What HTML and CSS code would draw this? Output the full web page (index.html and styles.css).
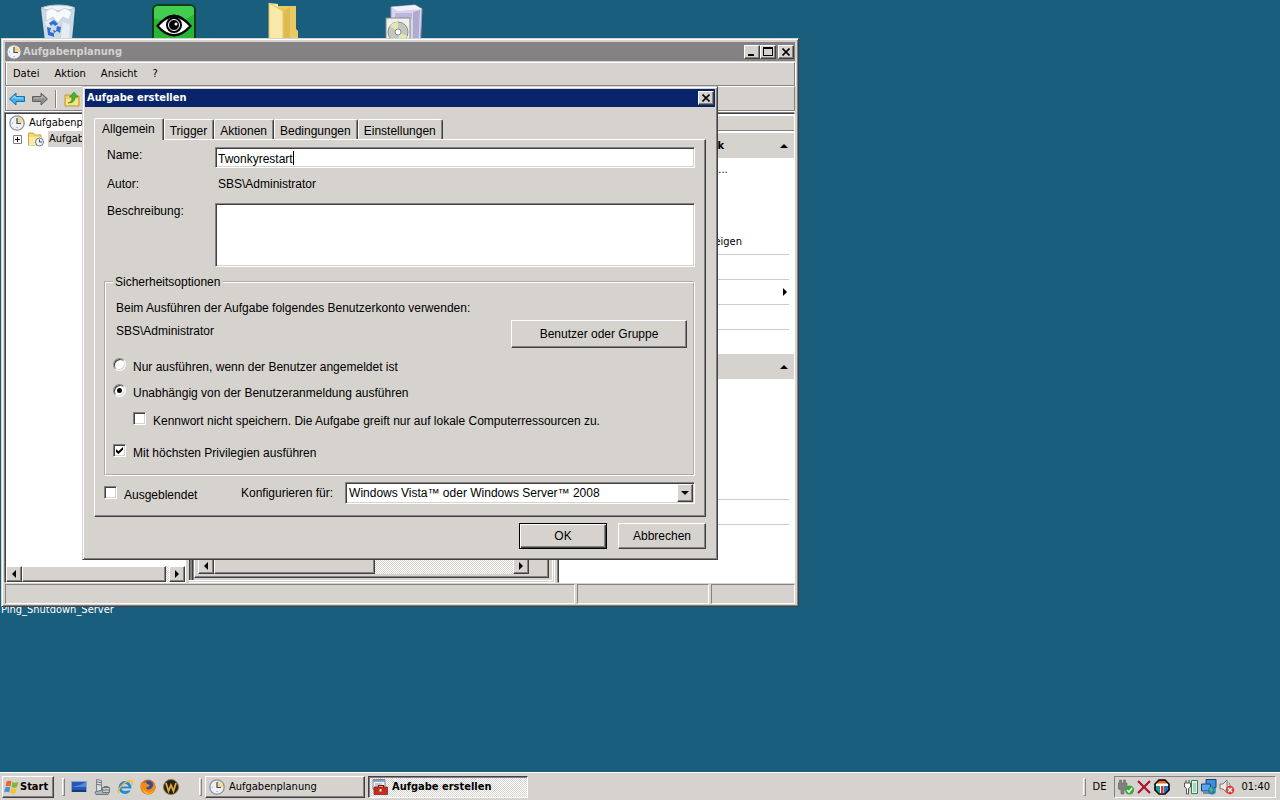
FILE: index.html
```html
<!DOCTYPE html>
<html lang="de">
<head>
    <meta charset="UTF-8">
    <meta name="viewport" content="width=device-width, initial-scale=1.0">
    <title>Aufgabenplanung</title>
    <link rel="stylesheet" href="styles.css">
</head>
<body>
    <svg class="sprite" aria-hidden="true">
        <symbol id="clock" viewBox="0 0 16 16">
            <circle cx="8" cy="8" r="7.2" fill="#eef2f6" stroke="#8a909a" stroke-width="1.3"/>
            <path d="M8 8V2A6 6 0 0 1 14 8z" fill="#f3d98a"/>
            <path d="M8 3v5.500h4" fill="none" stroke="#3a4a66" stroke-width="1.200"/>
            <path d="M3 8h1M8 13v-1" stroke="#8890a0"/>
        </symbol>
        <symbol id="close" viewBox="0 0 8 8">
            <path d="M.5.5l7 7M7.500.5l-7 7" fill="none" stroke="#000" stroke-width="1.600"/>
        </symbol>
        <symbol id="left" viewBox="0 0 8 8"><path d="M6 0v8L2 4z" fill="#000"/></symbol>
        <symbol id="right" viewBox="0 0 8 8"><path d="M2 0v8l4-4z" fill="#000"/></symbol>
        <symbol id="up" viewBox="0 0 8 8"><path d="M0 6h8L4 2z" fill="#000"/></symbol>
        <symbol id="down" viewBox="0 0 8 8"><path d="M0 2h8L4 6z" fill="#000"/></symbol>
    </svg>

    <main class="desktop">
        <svg class="desk-icon recycle" width="38" height="48" viewBox="0 0 38 48">
            <path d="M2 4h34l-4 42H7z" fill="#cfdbe4"/>
            <path d="M2 4c8-4 27-4 34 0-7 4-26 4-34 0z" fill="#eef4f8" stroke="#a9bac6"/>
            <path d="M7 7l6-3 6 4 7-4 7 4-3 8-6-3-5 6-5-6-7 4z" fill="#f7fafc" stroke="#b4c3cd" stroke-width=".7"/>
            <path d="M24 18l7 3-2 18-7-4zM6 18l5-3 4 5-6 4z" fill="#e6edf2"/>
            <path d="M10 19l5-3 4 4-3 2-2-2-2 2zM18 22l4 1-1 6-3-2-3 2-1-3 3 1zM8 23l4 1-1 4 4 1v4l-6-2z" fill="#2d6fd2"/>
        </svg>
        <svg class="desk-icon eye" width="44" height="48" viewBox="0 0 44 48">
            <rect x="1" y="1" width="42" height="46" rx="5" fill="#27b637" stroke="#123c18" stroke-width="2"/>
            <path d="M2 14V6q0-4 4-4h32q4 0 4 4v4Q24 24 2 14z" fill="#43cc50"/>
            <path d="M4 22Q22-1 40 22 22 43 4 22z" fill="#000"/>
            <path d="M7 22Q22 5 37 22 22 38 7 22z" fill="#fff"/>
            <circle cx="22" cy="21" r="8" fill="#000"/>
            <circle cx="22" cy="21" r="5.500" fill="none" stroke="#fff"/>
            <circle cx="24" cy="20" r="1.500" fill="#fff"/>
        </svg>
        <svg class="desk-icon folder" width="32" height="48" viewBox="0 0 32 48">
            <path d="M2 1l9 1v44H2z" fill="#fbe9a0"/>
            <path d="M11 4h18v23l2 2v18H11z" fill="#e8c964"/>
            <path d="M2 1l14 8v38H2z" fill="#f9e9a6" stroke="#dcc26a"/>
            <path d="M17 9l6-4v42h-6z" fill="#dfba50"/>
        </svg>
        <svg class="desk-icon installer" width="38" height="48" viewBox="0 0 38 48">
            <path d="M6 3l24-2 7 4-2 42H6z" fill="#d8d4ec" stroke="#9a98be"/>
            <path d="M6 3l24-2 7 4-24 2z" fill="#f2f0fb"/>
            <path d="M28 8l7-2-2 40h-5z" fill="#aeaad0"/>
            <path d="M10 9h17v6H10z" fill="#bcb8dc"/>
            <rect x="1" y="14" width="24" height="33" fill="#eef0ee" stroke="#888"/>
            <circle cx="13" cy="28" r="10" fill="#c3c7c0" stroke="#8c908c"/>
            <path d="M13 28L5 22a10 10 0 0 1 8-4zM13 28l9 4a10 10 0 0 1-7 6z" fill="#e4e8a8"/>
            <circle cx="13" cy="28" r="3" fill="#fff" stroke="#888"/>
        </svg>
        <span class="desk-label">Ping_Shutdown_Server</span>

        <section class="window main-window">
            <header class="titlebar">
                <svg class="icon"><use href="#clock"/></svg>
                <h1>Aufgabenplanung</h1>
                <button class="caption" aria-label="Minimieren"><svg width="10" height="8"><path d="M1 6h6v2H1z"/></svg></button>
                <button class="caption" aria-label="Maximieren"><svg width="10" height="9"><path d="M0 0h10v9H0zM1 2v6h8V2z" fill-rule="evenodd"/></svg></button>
                <button class="caption caption-close" aria-label="Schließen"><svg width="8" height="8"><use href="#close"/></svg></button>
            </header>
            <nav class="menubar">
                <a href="#">Datei</a>
                <a href="#">Aktion</a>
                <a href="#">Ansicht</a>
                <a href="#">?</a>
            </nav>
            <div class="toolbar">
                <button aria-label="Zurück"><svg class="icon" viewBox="0 0 16 16"><path d="M.5 8L7 2v3.500h8.500v5H7V14z" fill="#3fb0ee" stroke="#1c6ea8"/><path d="M3 7.500l3-2.500v2h8" fill="none" stroke="#a4dcfa"/></svg></button>
                <button aria-label="Vorwärts"><svg class="icon" viewBox="0 0 16 16"><path d="M15.500 8L9 2v3.500H.5v5H9V14z" fill="#8e8e8e" stroke="#606060"/><path d="M2 7h8V5l3 2.500" fill="none" stroke="#bbb"/></svg></button>
                <span class="tool-sep"></span>
                <button aria-label="Eine Ebene höher"><svg class="icon" viewBox="0 0 16 16"><path d="M1 4h5l1 1h8v10H1z" fill="#f1cf62" stroke="#c49a30"/><path d="M2 8h12v6H2z" fill="#f9e48e"/><path d="M4 12c4-1 4-4 4-6H5.500L10 1l4 5h-3c0 4-2 6-7 6z" fill="#49b52d" stroke="#2b7d1a" stroke-width=".6"/></svg></button>
            </div>
            <div class="panes">
                <div class="pane tree">
                    <ul>
                        <li><svg class="icon"><use href="#clock"/></svg><span>Aufgabenpl</span></li>
                        <li class="child">
                            <svg width="9" height="9"><path d="M.5.5h8v8h-8z" fill="#fff" stroke="#808080"/><path d="M2 4.500h5M4.500 2v5" stroke="#000"/></svg>
                            <svg class="icon" viewBox="0 0 16 16"><path d="M.5 2h5l1 2H13v10H.5z" fill="#f5d978" stroke="#c9a545"/><path d="M1 6h12v8H1z" fill="#fbeaa6"/><circle cx="11.500" cy="11" r="4" fill="#eef2f6" stroke="#6f7a88"/><path d="M11.500 8.500V11H14" fill="none" stroke="#3a4a66"/></svg>
                            <span class="selected">Aufgabe</span>
                        </li>
                    </ul>
                    <div class="scrollbar">
                        <button aria-label="Links"><svg width="8" height="8"><use href="#left"/></svg></button>
                        <div class="track"><div class="thumb thumb-wide"></div></div>
                        <button aria-label="Rechts"><svg width="8" height="8"><use href="#right"/></svg></button>
                    </div>
                </div>
                <div class="center">
                    <div class="center-body">
                        <div class="scrollbar">
                            <button aria-label="Links"><svg width="8" height="8"><use href="#left"/></svg></button>
                            <div class="track"><div class="thumb"></div></div>
                            <button aria-label="Rechts"><svg width="8" height="8"><use href="#right"/></svg></button>
                        </div>
                    </div>
                </div>
                <aside class="pane actions">
                    <div class="actions-head"></div>
                    <h2>Aufgabenplanungsbibliothek<svg width="8" height="8"><use href="#up"/></svg></h2>
                    <ul>
                        <li>Einfache Aufgabe erstellen...</li>
                        <li></li>
                        <li></li>
                        <li class="line">Alle aktiven Aufgaben anzeigen</li>
                        <li class="line"></li>
                        <li class="line more"><svg width="8" height="8"><use href="#right"/></svg></li>
                        <li class="line"></li>
                        <li></li>
                    </ul>
                    <h2><svg width="8" height="8"><use href="#up"/></svg></h2>
                    <ul>
                        <li></li>
                        <li></li>
                        <li></li>
                        <li></li>
                        <li class="line"></li>
                        <li class="line"></li>
                    </ul>
                </aside>
            </div>
            <footer class="statusbar"><span></span><span></span><span></span></footer>
        </section>

        <section class="window dialog" role="dialog" aria-labelledby="dialog-title">
            <header class="titlebar active">
                <h1 id="dialog-title">Aufgabe erstellen</h1>
                <button class="caption" aria-label="Schließen"><svg width="8" height="8"><use href="#close"/></svg></button>
            </header>
            <form class="dialog-body">
                <div class="tabs" role="tablist">
                    <button type="button" role="tab" class="tab current" aria-selected="true">Allgemein</button>
                    <button type="button" role="tab" class="tab">Trigger</button>
                    <button type="button" role="tab" class="tab">Aktionen</button>
                    <button type="button" role="tab" class="tab">Bedingungen</button>
                    <button type="button" role="tab" class="tab">Einstellungen</button>
                </div>
                <div class="tab-panel">
                    <div class="fields">
                        <label for="name">Name:</label>
                        <div class="name-box">
                            <input type="text" id="name" class="sunken" value="Twonkyrestart">
                            <span class="caret"></span>
                        </div>
                        <span>Autor:</span>
                        <span class="author">SBS\Administrator</span>
                        <label for="desc">Beschreibung:</label>
                        <textarea id="desc" class="sunken"></textarea>
                    </div>
                    <fieldset>
                        <legend>Sicherheitsoptionen</legend>
                        <p>Beim Ausführen der Aufgabe folgendes Benutzerkonto verwenden:</p>
                        <div class="account">
                            <span>SBS\Administrator</span>
                            <button type="button" class="btn btn-wide">Benutzer oder Gruppe</button>
                        </div>
                        <label class="option"><input type="radio" name="logon">Nur ausführen, wenn der Benutzer angemeldet ist</label>
                        <label class="option"><input type="radio" name="logon" checked>Unabhängig von der Benutzeranmeldung ausführen</label>
                        <label class="option indent"><input type="checkbox">Kennwort nicht speichern. Die Aufgabe greift nur auf lokale Computerressourcen zu.</label>
                        <label class="option spaced"><input type="checkbox" checked>Mit höchsten Privilegien ausführen</label>
                    </fieldset>
                    <div class="config">
                        <label class="option"><input type="checkbox">Ausgeblendet</label>
                        <label for="os">Konfigurieren für:</label>
                        <div class="select-box sunken">
                            <select id="os">
                                <option>Windows Vista™ oder Windows Server™ 2008</option>
                            </select>
                            <span class="drop"><svg width="8" height="8"><use href="#down"/></svg></span>
                        </div>
                    </div>
                </div>
                <div class="buttons">
                    <button type="button" class="btn default">OK</button>
                    <button type="button" class="btn">Abbrechen</button>
                </div>
            </form>
        </section>
    </main>

    <footer class="taskbar">
        <button class="task start">
            <svg class="icon" viewBox="0 0 16 16"><path d="M2.500 2.500q2.500-1.500 5 0l-1 5q-2.500-1.500-5 0z" fill="#ef6330"/><path d="M8.500 3q2.500 1.500 6 0l-1.500 5q-3 1.500-5.500 0z" fill="#7cba35"/><path d="M1.200 8.500q2.500-1.500 5 0l-1 5q-2.500-1.500-5 0z" fill="#4a90dc"/><path d="M7.200 9q2.500 1.500 5.500 0l-1.200 5q-3 1.500-5.300 0z" fill="#f6c22e"/></svg>
            Start
        </button>
        <span class="grip"></span>
        <div class="quick">
            <svg class="icon" viewBox="0 0 16 16"><path d="M.5 2.500h15v10H.5z" fill="#2458b8" stroke="#8da3c6"/><path d="M1 8q7-1 14-5v5H1z" fill="#4f8ade"/><path d="M1 11h14v2H1z" fill="#173a78"/></svg>
            <svg class="icon" viewBox="0 0 16 16"><path d="M2.500.5l5 1v12h-5z" fill="#d9dde0" stroke="#7c8388"/><path d="M3 3l4 .5M3 5.500l4 .5" stroke="#6b7277"/><path d="M1 13l7-2 7 2-1 2.500H2z" fill="#a9b1b6" stroke="#6e767b"/><path d="M8.500 8.500h7v5h-7z" fill="#c8ced2" stroke="#6e767b"/><path d="M10 8.500v-1h4v1M9 11h6" fill="none" stroke="#6e767b"/></svg>
            <svg class="icon" viewBox="0 0 16 16"><circle cx="8" cy="8.500" r="5" fill="none" stroke="#2489d8" stroke-width="3"/><path d="M4 7.500h9v2H4z" fill="#2489d8"/><path d="M9 9.500h6v2H9z" fill="#d6d3ce"/><path d="M2 14.500C-1 11 9 0 15 2c1 1 0 3-1 4" fill="none" stroke="#f0bb2c" stroke-width="1.400"/></svg>
            <svg class="icon" viewBox="0 0 16 16"><circle cx="8" cy="8" r="7.500" fill="#d9621a"/><circle cx="8.500" cy="6.500" r="4.700" fill="#2c4f94"/><path d="M1 3l3 1 2-1 1 2 3 1-2 2-2 1c2 3 6 1 7-2l1-4c4 6 0 13-6 12.500S-1 10 1 3z" fill="#f08a1c"/><path d="M3 10c2 4 7 5 10 2-2 4-9 4-10-2z" fill="#fbc93a"/></svg>
            <svg class="icon" viewBox="0 0 16 16"><circle cx="8" cy="8" r="7.500" fill="#26211a" stroke="#8b7440"/><path d="M3 4l2.500 8L8 6l2.500 6L13 4" fill="none" stroke="#dcaa3c" stroke-width="1.800"/></svg>
        </div>
        <span class="grip"></span>
        <div class="tasks">
            <button class="task"><svg class="icon"><use href="#clock"/></svg>Aufgabenplanung</button>
            <button class="task pressed">
                <svg class="icon" viewBox="0 0 16 16"><path d="M1 .5h12v10H1z" fill="#f4f4f4" stroke="#7888a0"/><path d="M1 1h12v2H1z" fill="#8fa3c4"/><path d="M3 5h7M3 7h3" stroke="#999"/><path d="M6.500 8V6.500h5V8" fill="none" stroke="#811" stroke-width="1.200"/><path d="M2 8h13.500v7.500H2z" fill="#cf2a22" stroke="#8a1410" stroke-width=".7"/><path d="M2 11h13.500" stroke="#741"/><path d="M7.500 10h2v2.500h-2z" fill="#eee"/></svg>
                Aufgabe erstellen
            </button>
        </div>
        <span class="grip"></span>
        <span class="lang">DE</span>
        <div class="tray">
            <svg class="icon" viewBox="0 0 16 16"><path d="M1.500 1h2v3h2V1h2v3H9v4q0 3-3 3v4H3v-4Q0 11 0 8V4h1.500z" fill="#808080" stroke="#666" stroke-width=".6"/><circle cx="11.500" cy="11" r="4.500" fill="#39a935"/><path d="M9 11l2 2 3-4" fill="none" stroke="#fff" stroke-width="1.500"/></svg>
            <svg class="icon" viewBox="0 0 16 16"><path d="M2 2l12 12M14 2L2 14" stroke="#b01030" stroke-width="2.200"/></svg>
            <svg class="icon" viewBox="0 0 16 16"><path d="M5 1h6l4 4v6l-4 4H5l-4-4V5z" fill="#fff"/><path d="M1.500 5L5 1h6l3.500 4z" fill="#e8661c"/><path d="M1 7h5v7H4l-3-3z" fill="#1c9a9a"/><path d="M10 7h5v4l-3 3h-2z" fill="#2672c8"/><path d="M2 4.500h12v2.500h-4v8H6V7H2z" fill="#fff"/><path d="M7 7h2.500v7H7z" fill="#d8381c"/><path d="M5 1h6l4 4v6l-4 4H5l-4-4V5z" fill="none" stroke="#000" stroke-width="1.600"/></svg>
            <span class="tray-gap"></span>
            <svg class="icon" viewBox="0 0 16 16"><path d="M8.500 1.500h6v13h-6z" fill="#dff3e4" stroke="#3b7a58"/><path d="M10 4h3v9h-3z" fill="#9fdcb4"/><path d="M3 1v3M6 1v3M1.500 4h6v4l-2 1.500V15h-2V9.500L1.500 8z" fill="#fff" stroke="#555"/></svg>
            <svg class="icon" viewBox="0 0 16 16"><path d="M5 .5h10v8H5z" fill="#3e8ee0" stroke="#1c3f78"/><path d="M.5 5h9v7h-9z" fill="#58a6ee" stroke="#1c3f78"/><path d="M2 14h6" stroke="#1c3f78"/><circle cx="11" cy="11.500" r="4" fill="#2477c8"/><path d="M8 10l3-2 1 3-2 3zM13 10l2 1-1 3z" fill="#4fc050"/></svg>
            <svg class="icon" viewBox="0 0 16 16"><path d="M1 5h3l4-4v13l-4-4H1z" fill="#e8e8e8" stroke="#777"/><path d="M10 4q2 2 1 4" fill="none" stroke="#888"/><circle cx="11" cy="11" r="4.300" fill="#dc3c34"/><path d="M9 9l4 4M13 9l-4 4" stroke="#fff" stroke-width="1.300"/></svg>
            <time>01:40</time>
        </div>
    </footer>
</body>
</html>
```

FILE: styles.css
```css
* {
    box-sizing: border-box;
}
body {
    margin: 0;
    height: 100vh;
    display: flex;
    flex-direction: column;
    overflow: hidden;
    background: #195e7c;
    color: #000;
    font-family: "DejaVu Sans Condensed", "Liberation Sans", sans-serif;
    font-size: 11px;
    line-height: 16px;
}
h1, h2, p, ul {
    margin: 0;
    padding: 0;
}
ul {
    list-style: none;
}
button, input, select, textarea {
    font: inherit;
    color: inherit;
    margin: 0;
    padding: 0;
}
a {
    color: inherit;
    text-decoration: none;
}
svg {
    display: block;
    flex: none;
}
.sprite {
    position: absolute;
    width: 0;
    height: 0;
}
.icon {
    width: 16px;
    height: 16px;
}

/* Desktop */
.desktop {
    flex: 1;
    position: relative;
    overflow: hidden;
}
.desk-icon {
    position: absolute;
    top: 4px;
}
.recycle { left: 39px; }
.eye { left: 152px; }
.folder { left: 267px; top: 2px; }
.installer { left: 385px; }
.desk-label {
    position: absolute;
    left: 1px;
    top: 602px;
    color: #fff;
}

/* Windows */
.window {
    position: absolute;
    background: #d6d3ce;
    border: 1px solid;
    border-color: #d6d3ce #404040 #404040 #d6d3ce;
    box-shadow: inset 1px 1px #fff, inset -1px -1px #808080;
}
.main-window {
    left: 1px;
    top: 38px;
    width: 798px;
    padding: 3px 3px 2px;
}
.dialog {
    left: 82px;
    top: 86px;
    width: 636px;
    padding: 2px;
}
.titlebar {
    display: flex;
    align-items: center;
    height: 19px;
    padding: 0 1px;
    background: #848284;
    color: #d6d3ce;
}
.titlebar.active {
    height: 18px;
    background: #08246b;
    color: #fff;
}
.titlebar h1 {
    flex: 1;
    padding-left: 1px;
    font-size: 11px;
}
.caption {
    display: flex;
    align-items: center;
    justify-content: center;
    width: 16px;
    height: 14px;
}
.caption-close {
    margin-left: 2px;
}
.caption, .scrollbar button, .thumb, .drop, .btn, .task {
    background: #d6d3ce;
    border: 1px solid;
    border-color: #fff #404040 #404040 #fff;
    box-shadow: inset -1px -1px #848284;
    border-radius: 0;
}
.menubar {
    display: flex;
    align-items: center;
    gap: 15px;
    height: 24px;
    margin-top: 1px;
    padding-left: 7px;
    border: 1px solid #848284;
    border-top-color: #fff;
    box-shadow: inset 1px 0 #fff, 1px 0 #fff;
}
.toolbar {
    display: flex;
    align-items: center;
    gap: 7px;
    height: 25px;
    padding-left: 3px;
    border: 1px solid #848284;
    border-top-color: #fff;
    box-shadow: inset 1px 0 #fff, 0 1px #fff;
}
.toolbar button {
    padding: 0;
    border: 0;
    background: none;
}
.tool-sep {
    width: 2px;
    height: 18px;
    border-left: 1px solid #848284;
    border-right: 1px solid #fff;
}

/* Panes of the console */
.panes {
    display: grid;
    grid-template-columns: 181px 1fr 237px;
    gap: 3px;
    min-height: 470px;
    margin-top: 2px;
}
.pane {
    display: flex;
    flex-direction: column;
    background: #fff;
    border: 1px solid;
    border-color: #404040 #fff #fff #404040;
    box-shadow: -1px -1px #848284;
}
.tree ul {
    flex: 1;
    padding: 1px 0 0 3px;
    overflow: hidden;
}
.tree li {
    display: flex;
    align-items: center;
    gap: 4px;
    white-space: nowrap;
}
.tree .child {
    padding-left: 4px;
}
.tree .child .icon {
    margin-left: 2px;
}
.selected {
    background: #d6d3ce;
    padding: 0 1px;
}
.scrollbar {
    display: flex;
    height: 16px;
}
.scrollbar button {
    display: flex;
    align-items: center;
    justify-content: center;
    width: 16px;
}
.track {
    flex: 1;
    background: repeating-conic-gradient(#fff 0 25%, #d6d3ce 0 50%) 0 0 / 2px 2px;
}
.thumb {
    width: 54%;
    height: 100%;
}
.thumb-wide {
    width: 98%;
}
.center {
    display: flex;
    padding: 0 6px 5px 5px;
    background: repeating-linear-gradient(to right, #404040 0 1px, #848284 1px 3px);
    background-color: #d6d3ce;
    background-size: 5px 100%;
    background-repeat: no-repeat;
    box-shadow: inset 0 -1px #fff, inset -1px 0 #fff, inset 0 -2px #d6d3ce, inset -2px 0 #d6d3ce, inset 0 -3px #fff, inset -3px 0 #fff;
}
.center-body {
    flex: 1;
    display: flex;
    flex-direction: column;
    justify-content: flex-end;
    padding: 0 19px 3px 3px;
    background: #d6d3ce;
    border: 1px solid;
    border-color: #fff #404040 #404040 #fff;
    box-shadow: inset -1px -1px #848284;
}
.actions-head {
    height: 17px;
    margin-bottom: 2px;
    background: #d6d3ce;
    border-top: 2px solid #fff;
    border-bottom: 1px solid #848284;
}
.actions h2 {
    display: flex;
    align-items: center;
    justify-content: space-between;
    height: 25px;
    padding: 0 6px 0 4px;
    background: #d6d3ce;
    font-size: 11px;
}
.actions h2 svg {
    margin-left: auto;
}
.actions ul {
    padding: 0 5px 0 26px;
}
.actions li {
    height: 24px;
    line-height: 24px;
    white-space: nowrap;
}
.actions li.line {
    height: 25px;
    margin-left: -20px;
    padding-left: 20px;
    border-bottom: 1px solid #ccc;
}
.actions .more {
    display: flex;
    align-items: center;
    justify-content: flex-end;
}
.statusbar {
    display: grid;
    grid-template-columns: 1fr 132px 84px;
    gap: 2px;
    height: 20px;
    margin-top: 1px;
}
.statusbar span {
    border: 1px solid;
    border-color: #848284 #fff #fff #848284;
}

/* Dialog */
.dialog-body {
    padding: 11px 9px 8px;
    font-family: "Liberation Sans", Arial, sans-serif;
    font-size: 12px;
}
.tabs {
    display: flex;
    align-items: flex-end;
}
.tab {
    height: 20px;
    padding: 2px 6px 0 5px;
    background: #d6d3ce;
    border: 1px solid;
    border-color: #fff #404040 transparent #fff;
    border-bottom: 0;
    border-radius: 2px 2px 0 0;
    box-shadow: inset -1px 0 #848284;
}
.tab.current {
    height: 22px;
    padding: 0 8px 1px 7px;
    margin-bottom: -1px;
    z-index: 1;
}
.tab-panel {
    padding: 7px 10px 12px 9px;
    border: 1px solid;
    border-color: #fff #404040 #404040 #fff;
    box-shadow: inset -1px -1px #848284;
}
.sunken {
    background: #fff;
    border: 1px solid;
    border-color: #848284 #fff #fff #848284;
    border-radius: 0;
    box-shadow: inset 1px 1px #404040, inset -1px -1px #d6d3ce;
    outline: none;
}
.fields {
    display: grid;
    grid-template-columns: 108px 1fr;
    row-gap: 8px;
    padding-left: 3px;
}
.name-box {
    position: relative;
}
.name-box input {
    display: block;
    width: 100%;
    height: 21px;
    padding: 2px 2px 0;
}
.caret {
    position: absolute;
    left: 78px;
    top: 4px;
    width: 1px;
    height: 14px;
    background: #000;
}
.author {
    padding: 0 0 3px 3px;
}
.fields textarea {
    height: 64px;
    resize: none;
}
fieldset {
    min-width: 0;
    margin: 8px 0 0;
    padding: 11px 6px 12px 7px;
    border: 2px groove #fff;
}
legend {
    padding: 0 3px 0 2px;
    line-height: 14px;
}
fieldset p {
    padding-left: 3px;
}
.account {
    display: flex;
    justify-content: space-between;
    margin: 4px 0 10px;
    padding-left: 3px;
}
.account span {
    padding-top: 3px;
}
.btn {
    width: 88px;
    height: 26px;
}
.btn-wide {
    width: 176px;
    height: 28px;
}
.btn.default {
    border-color: #000;
    box-shadow: inset 1px 1px #fff, inset -1px -1px #404040, inset -2px -2px #848284;
}
.option {
    display: flex;
    align-items: flex-start;
    gap: 7px;
    margin-bottom: 8px;
    line-height: 18px;
}
.option input {
    appearance: none;
    flex: none;
    width: 13px;
    height: 13px;
    background: #fff;
    border: 1px solid;
    border-color: #848284 #fff #fff #848284;
    box-shadow: inset 1px 1px #404040, inset -1px -1px #d6d3ce;
}
.option input[type="radio"] {
    border-radius: 50%;
}
.option input:checked::before {
    content: "";
    display: block;
    width: 7px;
    height: 7px;
    margin: 2px;
    background: #000;
    clip-path: polygon(0 30%, 35% 60%, 100% 0, 100% 40%, 35% 100%, 0 70%);
}
.option input[type="radio"]:checked::before {
    width: 5px;
    height: 5px;
    margin: 3px;
    clip-path: circle(50%);
}
.option.indent {
    margin: 10px 0 0 20px;
}
.option.spaced {
    margin: 14px 0 0;
}
.config {
    display: flex;
    align-items: center;
    margin-top: 6px;
}
.config .option {
    width: 137px;
    margin: 4px 0 0;
}
.select-box {
    position: relative;
    flex: 1;
    height: 22px;
    margin-left: 12px;
}
.select-box select {
    appearance: none;
    display: block;
    width: 100%;
    height: 20px;
    padding-left: 3px;
    background: none;
    border: 0;
    outline: none;
}
.drop {
    position: absolute;
    top: 1px;
    right: 1px;
    display: flex;
    align-items: center;
    justify-content: center;
    width: 16px;
    height: 18px;
    pointer-events: none;
}
.buttons {
    display: flex;
    justify-content: flex-end;
    gap: 11px;
    margin-top: 6px;
}

/* Taskbar */
.taskbar {
    display: flex;
    align-items: center;
    height: 28px;
    padding: 2px 4px 1px 2px;
    background: #d6d3ce;
    box-shadow: inset 0 1px #fff;
}
.task {
    display: flex;
    align-items: center;
    gap: 4px;
    width: 160px;
    height: 22px;
    padding: 0 3px;
    white-space: nowrap;
}
.start {
    width: 52px;
    gap: 0;
    padding: 0 1px;
    font-weight: bold;
}
.pressed {
    border-color: #404040 #fff #fff #404040;
    box-shadow: inset 1px 1px #848284;
    background: repeating-conic-gradient(#fff 0 25%, #d6d3ce 0 50%) 0 0 / 2px 2px;
    font-weight: bold;
}
.grip {
    width: 3px;
    height: 18px;
    margin: 0 6px 0 8px;
    border: 1px solid;
    border-color: #fff #848284 #848284 #fff;
}
.quick {
    display: flex;
    gap: 7px;
    width: 120px;
}
.tasks {
    display: flex;
    flex: 1;
    gap: 3px;
}
.quick + .grip {
    margin: 0 3px 0 8px;
}
.lang {
    padding: 0 8px 0 1px;
}
.tray {
    display: flex;
    align-items: center;
    gap: 2px;
    height: 22px;
    padding: 0 5px 0 3px;
    border: 1px solid;
    border-color: #848284 #fff #fff #848284;
}
.tray-gap {
    width: 9px;
}
.tray time {
    padding-left: 4px;
}
```
